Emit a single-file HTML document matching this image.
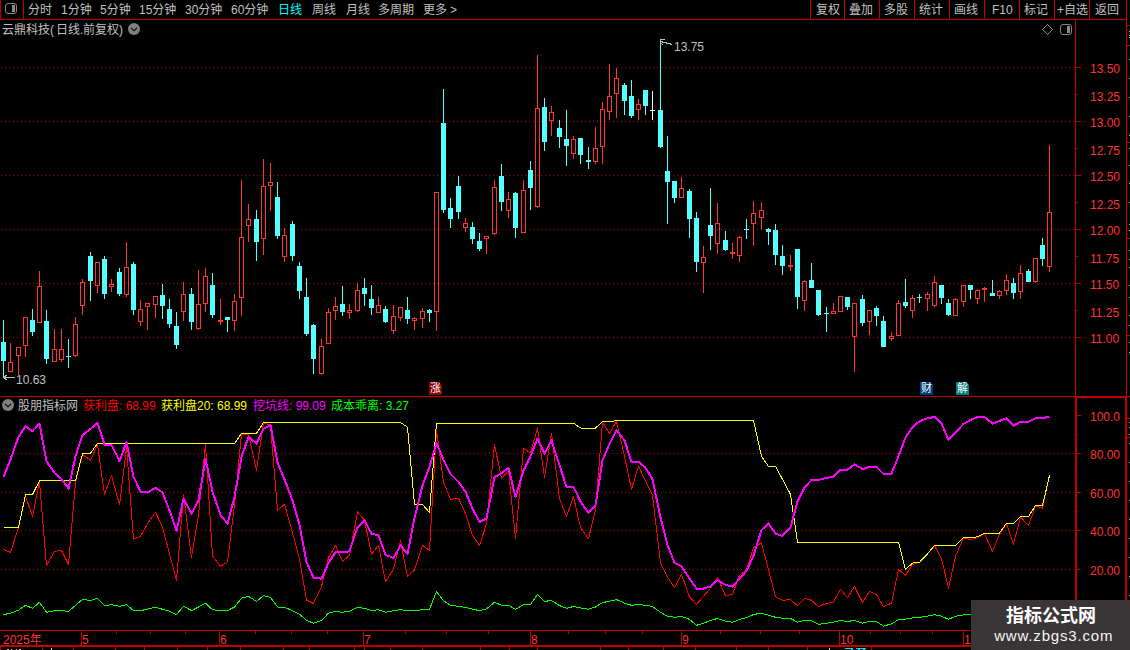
<!DOCTYPE html><html lang="zh"><head><meta charset="utf-8"><title>云鼎科技 日线</title><style>
html,body{margin:0;padding:0;background:#000}
body{width:1130px;height:650px;overflow:hidden;position:relative;font-family:"Liberation Sans","Noto Sans CJK SC",sans-serif;font-size:12px;line-height:12px}
#chart,.ic{position:absolute;left:0;top:0}
.t{position:absolute;white-space:nowrap;height:12px}
i{position:absolute;left:0;top:0;font-style:normal;color:inherit;font-family:"Liberation Sans","Noto Sans CJK SC",sans-serif;font-size:12px;line-height:12px;overflow:visible;white-space:nowrap;width:100%;height:100%}
.mk{position:absolute;width:13px;height:13px;box-sizing:border-box;padding:1px 0 0 1px;clip-path:polygon(0 0,10px 0,13px 3px,13px 13px,0 13px)}
.mk i{font-size:11px;left:1px;top:0;color:#fff}
#wm{position:absolute;left:971px;top:600px;width:159px;height:50px;background:#3a3536}
.wm1{position:absolute;left:35px;top:4.6px;width:90px;height:24px}
.wm1 i{font-size:18px;line-height:22px;font-weight:bold;color:#fff}
.wm2{position:absolute;left:23.2px;top:27.4px;font-size:15px;letter-spacing:0.83px;line-height:18px;color:#f4f4f4;white-space:nowrap}
</style></head><body><svg id="chart" width="1130" height="650" viewBox="0 0 1130 650" shape-rendering="crispEdges"><path d="M1 67.5H1075M1 121.5H1075M1 175.5H1075M1 229.5H1075M1 283.5H1075M1 337.5H1075M1 453.5H1075M1 492.5H1075M1 530.5H1075M1 569.5H1075" stroke="#c00000" stroke-width="1" stroke-dasharray="1 3" fill="none"/><path d="M0 19h1127v1h-1127zM0 0h1v20h-1zM23 0h1v20h-1zM810 0h1v20h-1zM844 0h1v20h-1zM879 0h1v20h-1zM914 0h1v20h-1zM949 0h1v20h-1zM984 0h1v20h-1zM1019 0h1v20h-1zM1054 0h1v20h-1zM1089 0h1v20h-1zM1126 0h1v397h-1zM1075 20h1v377h-1zM0 396h1130v1h-1130zM1075 396h52v2h-52zM1075 396h2v254h-2zM1125 396h2v254h-2zM0 630h1075v1h-1075zM0 645h1075v1h-1075zM0 646h1075v1h-1075zM81 630h1v16h-1zM219 630h1v16h-1zM363 630h1v16h-1zM530 630h1v16h-1zM681 630h1v16h-1zM839 630h1v16h-1zM963 630h1v16h-1zM116 630h1v4h-1zM150 630h1v4h-1zM185 630h1v4h-1zM255 630h1v4h-1zM291 630h1v4h-1zM327 630h1v4h-1zM405 630h1v4h-1zM446 630h1v4h-1zM488 630h1v4h-1zM568 630h1v4h-1zM605 630h1v4h-1zM642 630h1v4h-1zM720 630h1v4h-1zM760 630h1v4h-1zM799 630h1v4h-1zM870 630h1v4h-1zM900 630h1v4h-1zM932 630h1v4h-1zM0 646h1v4h-1zM42 646h1v4h-1zM73 646h1v4h-1zM115 646h1v4h-1zM144 646h1v4h-1zM177 646h1v4h-1zM207 646h1v4h-1zM240 646h1v4h-1zM283 646h1v4h-1zM309 646h1v4h-1zM354 646h1v4h-1zM364 646h1v4h-1zM390 646h1v4h-1zM422 646h1v4h-1zM480 646h1v4h-1zM509 646h1v4h-1zM537 646h1v4h-1zM600 646h1v4h-1zM628 646h1v4h-1zM663 646h1v4h-1zM695 646h1v4h-1zM736 646h1v4h-1zM768 646h1v4h-1zM807 646h1v4h-1zM871 646h1v4h-1zM1076 67h5v1h-5zM1076 94h2v1h-2zM1076 121h5v1h-5zM1076 148h2v1h-2zM1076 175h5v1h-5zM1076 202h2v1h-2zM1076 229h5v1h-5zM1076 256h2v1h-2zM1076 283h5v1h-5zM1076 310h2v1h-2zM1076 337h5v1h-5zM1077 415h4v1h-4zM1077 434h1v1h-1zM1077 453h4v1h-4zM1077 473h1v1h-1zM1077 492h4v1h-4zM1077 511h1v1h-1zM1077 530h4v1h-4zM1077 550h1v1h-1zM1077 569h4v1h-4zM1127 25h3v1h-3zM1127 45h3v1h-3zM1127 142h3v1h-3zM1127 238h3v1h-3zM1127 335h3v1h-3zM1127 418h3v1h-3zM1127 437h3v1h-3z" fill="#c00000"/><path d="M1129 31h1v1h-1zM1129 35h1v1h-1zM1129 37h1v1h-1zM1129 59h1v1h-1zM1129 78h1v1h-1zM1129 97h1v1h-1zM1129 116h1v1h-1zM1129 135h1v1h-1zM1129 148h1v1h-1zM1129 165h1v1h-1zM1129 183h1v1h-1zM1129 202h1v1h-1zM1129 224h1v1h-1zM1129 230h1v1h-1zM1129 250h1v1h-1zM1129 259h1v1h-1zM1129 267h1v1h-1zM1129 285h1v1h-1zM1129 297h1v1h-1zM1129 315h1v1h-1zM1129 325h1v1h-1zM1129 342h1v1h-1zM1129 352h1v1h-1zM1129 422h1v1h-1zM1129 427h1v1h-1zM1129 434h1v1h-1zM1129 443h1v1h-1zM1129 462h1v1h-1zM1129 481h1v1h-1zM1129 500h1v1h-1zM1129 519h1v1h-1zM1129 538h1v1h-1zM1129 557h1v1h-1zM1129 576h1v1h-1zM1129 595h1v1h-1z" fill="#c0c0c0"/><path d="M10 343h1v19h-1zM8 362h5v10h-5zM9 363h3v8h-3zM18 356h1v19h-1zM16 347h5v9h-5zM17 348h3v7h-3zM25 346h1v11h-1zM23 317h5v29h-5zM24 318h3v27h-3zM39 271h1v15h-1zM37 286h5v37h-5zM38 287h3v35h-3zM54 329h1v20h-1zM52 349h5v13h-5zM53 350h3v11h-3zM61 329h1v20h-1zM61 360h1v2h-1zM59 349h5v11h-5zM60 350h3v9h-3zM75 317h1v7h-1zM75 356h1v1h-1zM73 324h5v32h-5zM74 325h3v30h-3zM82 279h1v3h-1zM82 306h1v9h-1zM80 282h5v24h-5zM81 283h3v22h-3zM97 286h1v7h-1zM95 262h5v24h-5zM96 263h3v22h-3zM111 279h1v5h-1zM111 287h1v5h-1zM109 284h5v3h-5zM110 285h3v1h-3zM126 242h1v25h-1zM126 295h1v2h-1zM124 267h5v28h-5zM125 268h3v26h-3zM140 300h1v9h-1zM140 322h1v4h-1zM138 309h5v13h-5zM139 310h3v11h-3zM147 307h1v23h-1zM145 303h5v4h-5zM146 304h3v2h-3zM155 305h1v13h-1zM153 296h5v9h-5zM154 297h3v7h-3zM183 282h1v12h-1zM183 312h1v9h-1zM181 294h5v18h-5zM182 295h3v16h-3zM198 270h1v34h-1zM198 329h1v1h-1zM196 304h5v25h-5zM197 305h3v23h-3zM205 268h1v8h-1zM205 304h1v8h-1zM203 276h5v28h-5zM204 277h3v26h-3zM220 299h1v21h-1zM220 322h1v3h-1zM218 320h5v2h-5zM234 294h1v7h-1zM234 321h1v10h-1zM232 301h5v20h-5zM233 302h3v18h-3zM241 180h1v57h-1zM241 298h1v18h-1zM239 237h5v61h-5zM240 238h3v59h-3zM248 204h1v15h-1zM248 226h1v16h-1zM246 219h5v7h-5zM247 220h3v5h-3zM263 159h1v27h-1zM263 239h1v16h-1zM261 186h5v53h-5zM262 187h3v51h-3zM270 163h1v19h-1zM270 186h1v25h-1zM268 182h5v4h-5zM269 183h3v2h-3zM284 228h1v7h-1zM284 257h1v5h-1zM282 235h5v22h-5zM283 236h3v20h-3zM321 339h1v7h-1zM321 374h1v1h-1zM319 346h5v28h-5zM320 347h3v26h-3zM328 308h1v4h-1zM326 312h5v32h-5zM327 313h3v30h-3zM335 297h1v9h-1zM335 311h1v9h-1zM333 306h5v5h-5zM334 307h3v3h-3zM349 304h1v6h-1zM349 313h1v6h-1zM347 310h5v3h-5zM348 311h3v1h-3zM357 283h1v7h-1zM357 311h1v1h-1zM355 290h5v21h-5zM356 291h3v19h-3zM378 297h1v8h-1zM376 305h5v8h-5zM377 306h3v6h-3zM393 305h1v11h-1zM393 331h1v3h-1zM391 316h5v15h-5zM392 317h3v13h-3zM400 318h1v3h-1zM398 307h5v11h-5zM399 308h3v9h-3zM414 317h1v1h-1zM414 321h1v9h-1zM412 318h5v3h-5zM413 319h3v1h-3zM422 308h1v3h-1zM422 319h1v9h-1zM420 311h5v8h-5zM421 312h3v6h-3zM436 312h1v19h-1zM434 192h5v120h-5zM435 193h3v118h-3zM465 218h1v5h-1zM465 228h1v4h-1zM463 223h5v5h-5zM464 224h3v3h-3zM486 239h1v15h-1zM484 236h5v3h-5zM485 237h3v1h-3zM494 180h1v7h-1zM494 234h1v1h-1zM492 187h5v47h-5zM493 188h3v45h-3zM508 192h1v7h-1zM508 211h1v7h-1zM506 199h5v12h-5zM507 200h3v10h-3zM523 180h1v10h-1zM521 190h5v43h-5zM522 191h3v41h-3zM537 55h1v53h-1zM537 207h1v1h-1zM535 108h5v99h-5zM536 109h3v97h-3zM551 106h1v6h-1zM551 121h1v15h-1zM549 112h5v9h-5zM550 113h3v7h-3zM573 136h1v3h-1zM573 154h1v5h-1zM571 139h5v15h-5zM572 140h3v13h-3zM595 127h1v21h-1zM595 162h1v2h-1zM593 148h5v14h-5zM594 149h3v12h-3zM602 102h1v7h-1zM602 147h1v17h-1zM600 109h5v38h-5zM601 110h3v36h-3zM609 64h1v32h-1zM609 112h1v8h-1zM607 96h5v16h-5zM608 97h3v14h-3zM616 68h1v10h-1zM616 94h1v24h-1zM614 78h5v16h-5zM615 79h3v14h-3zM638 99h1v5h-1zM638 110h1v10h-1zM636 104h5v6h-5zM637 105h3v4h-3zM681 177h1v11h-1zM679 188h5v10h-5zM680 189h3v8h-3zM703 246h1v11h-1zM703 263h1v30h-1zM701 257h5v6h-5zM702 258h3v4h-3zM717 203h1v20h-1zM717 244h1v10h-1zM715 223h5v21h-5zM716 224h3v19h-3zM732 243h1v9h-1zM732 254h1v5h-1zM730 252h5v2h-5zM739 236h1v1h-1zM739 256h1v6h-1zM737 237h5v19h-5zM738 238h3v17h-3zM753 201h1v12h-1zM753 224h1v22h-1zM751 213h5v11h-5zM752 214h3v9h-3zM761 202h1v8h-1zM761 218h1v12h-1zM759 210h5v8h-5zM760 211h3v6h-3zM790 255h1v10h-1zM790 267h1v4h-1zM788 265h5v2h-5zM804 280h1v1h-1zM804 301h1v10h-1zM802 281h5v20h-5zM803 282h3v18h-3zM833 303h1v8h-1zM831 311h5v3h-5zM832 312h3v1h-3zM838 296h5v16h-5zM839 297h3v14h-3zM854 337h1v35h-1zM852 303h5v34h-5zM853 304h3v32h-3zM869 322h1v13h-1zM867 310h5v12h-5zM868 311h3v10h-3zM891 332h1v4h-1zM891 339h1v2h-1zM889 336h5v3h-5zM890 337h3v1h-3zM898 300h1v3h-1zM896 303h5v33h-5zM897 304h3v31h-3zM912 295h1v3h-1zM912 311h1v7h-1zM910 298h5v13h-5zM911 299h3v11h-3zM927 292h1v2h-1zM927 299h1v12h-1zM925 294h5v5h-5zM926 295h3v3h-3zM934 276h1v6h-1zM934 306h1v1h-1zM932 282h5v24h-5zM933 283h3v22h-3zM955 298h1v1h-1zM953 299h5v17h-5zM954 300h3v15h-3zM963 302h1v5h-1zM961 285h5v17h-5zM962 286h3v15h-3zM977 289h1v1h-1zM977 299h1v5h-1zM975 290h5v9h-5zM976 291h3v7h-3zM984 287h1v1h-1zM984 290h1v12h-1zM982 288h5v2h-5zM999 290h1v1h-1zM999 296h1v3h-1zM997 291h5v5h-5zM998 292h3v3h-3zM1006 274h1v6h-1zM1006 291h1v4h-1zM1004 280h5v11h-5zM1005 281h3v9h-3zM1020 265h1v8h-1zM1020 292h1v7h-1zM1018 273h5v19h-5zM1019 274h3v17h-3zM1035 282h1v1h-1zM1033 258h5v24h-5zM1034 259h3v22h-3zM1049 145h1v67h-1zM1049 267h1v5h-1zM1047 212h5v55h-5zM1048 213h3v53h-3z" fill="#ff3232" fill-rule="evenodd"/><path d="M3 320h1v57h-1zM1 342h5v19h-5zM32 309h1v27h-1zM30 320h5v12h-5zM46 310h1v54h-1zM44 321h5v38h-5zM68 339h1v29h-1zM66 356h5v1h-5zM90 252h1v49h-1zM88 256h5v25h-5zM104 256h1v43h-1zM102 259h5v35h-5zM119 268h1v28h-1zM117 272h5v22h-5zM133 262h1v53h-1zM131 264h5v46h-5zM162 284h1v35h-1zM160 295h5v11h-5zM169 299h1v29h-1zM167 309h5v15h-5zM176 312h1v37h-1zM174 326h5v19h-5zM191 288h1v42h-1zM189 294h5v28h-5zM212 273h1v45h-1zM210 285h5v30h-5zM227 317h1v15h-1zM225 317h5v3h-5zM256 210h1v51h-1zM254 219h5v23h-5zM277 182h1v57h-1zM275 197h5v39h-5zM292 221h1v40h-1zM290 224h5v32h-5zM299 262h1v37h-1zM297 266h5v25h-5zM306 278h1v58h-1zM304 297h5v37h-5zM313 324h1v50h-1zM311 325h5v34h-5zM342 286h1v30h-1zM340 304h5v8h-5zM364 278h1v28h-1zM362 288h5v6h-5zM371 285h1v30h-1zM369 299h5v9h-5zM385 306h1v17h-1zM383 309h5v13h-5zM407 297h1v27h-1zM405 310h5v9h-5zM429 309h1v13h-1zM427 310h5v3h-5zM443 89h1v124h-1zM441 123h5v87h-5zM450 198h1v30h-1zM448 208h5v11h-5zM458 176h1v43h-1zM456 186h5v26h-5zM472 222h1v22h-1zM470 227h5v12h-5zM479 233h1v18h-1zM477 241h5v8h-5zM501 164h1v47h-1zM499 176h5v26h-5zM515 192h1v46h-1zM513 193h5v35h-5zM530 161h1v49h-1zM528 170h5v18h-5zM544 98h1v53h-1zM542 107h5v35h-5zM559 120h1v28h-1zM557 128h5v9h-5zM566 110h1v56h-1zM564 139h5v7h-5zM580 138h1v26h-1zM578 138h5v17h-5zM588 147h1v22h-1zM586 160h5v2h-5zM624 83h1v32h-1zM622 85h5v16h-5zM631 80h1v38h-1zM629 96h5v20h-5zM645 90h1v25h-1zM643 90h5v16h-5zM660 39h1v109h-1zM658 110h5v37h-5zM667 136h1v88h-1zM665 171h5v11h-5zM674 181h1v22h-1zM672 181h5v17h-5zM689 189h1v49h-1zM687 191h5v28h-5zM696 212h1v60h-1zM694 218h5v44h-5zM710 188h1v62h-1zM708 225h5v11h-5zM725 231h1v20h-1zM723 240h5v10h-5zM746 219h1v20h-1zM744 229h5v1h-5zM768 228h1v17h-1zM766 229h5v3h-5zM775 224h1v41h-1zM773 230h5v25h-5zM782 245h1v30h-1zM780 256h5v10h-5zM797 249h1v60h-1zM795 249h5v48h-5zM811 263h1v25h-1zM809 280h5v8h-5zM818 290h1v26h-1zM816 290h5v25h-5zM826 307h1v25h-1zM824 313h5v1h-5zM847 297h1v13h-1zM845 297h5v10h-5zM862 295h1v31h-1zM860 299h5v24h-5zM876 306h1v20h-1zM874 308h5v8h-5zM883 316h1v31h-1zM881 321h5v26h-5zM905 279h1v29h-1zM903 302h5v4h-5zM919 294h1v9h-1zM917 297h5v1h-5zM941 285h1v19h-1zM939 285h5v13h-5zM948 299h1v17h-1zM946 303h5v12h-5zM970 285h1v14h-1zM968 285h5v5h-5zM992 280h1v16h-1zM990 293h5v3h-5zM1013 278h1v21h-1zM1011 283h5v10h-5zM1028 269h1v13h-1zM1026 271h5v11h-5zM1042 238h1v28h-1zM1040 245h5v14h-5z" fill="#54ffff"/><path d="M652 91h1v29h-1zM650 110h5v1h-5z" fill="#ffffff"/><polyline points="3.5,549.2 10.5,552.5 18.5,527.4 25.5,496.2 32.5,516.6 39.5,481.5 46.5,565.4 54.5,551.3 61.5,550.4 68.5,564.6 75.5,482.0 82.5,454.6 90.5,460.2 97.5,444.8 104.5,494.4 111.5,475.3 119.5,505.0 126.5,447.5 133.5,539.2 140.5,536.2 147.5,523.8 155.5,512.1 162.5,527.4 169.5,553.9 176.5,580.5 183.5,494.4 191.5,557.5 198.5,515.0 205.5,444.3 212.5,555.7 220.5,566.3 227.5,561.9 234.5,505.0 241.5,434.2 248.5,434.2 256.5,470.5 263.5,422.7 270.5,425.4 277.5,510.3 284.5,504.1 292.5,532.7 299.5,559.2 306.5,600.0 313.5,603.5 321.5,586.7 328.5,557.5 335.5,545.4 342.5,561.4 349.5,555.4 357.5,512.0 364.5,520.3 371.5,554.3 378.5,545.4 385.5,581.7 393.5,569.0 400.5,540.7 407.5,576.6 414.5,569.9 422.5,545.4 429.5,550.4 436.5,429.8 443.5,482.3 450.5,499.3 458.5,498.3 465.5,513.5 472.5,535.4 479.5,545.4 486.5,523.8 494.5,444.3 501.5,478.5 508.5,470.5 515.5,538.5 523.5,448.4 530.5,452.8 537.5,428.0 544.5,477.6 551.5,433.3 559.5,498.8 566.5,516.5 573.5,497.0 580.5,527.4 588.5,538.9 595.5,509.7 602.5,422.2 609.5,433.3 616.5,421.3 624.5,456.3 631.5,489.6 638.5,466.1 645.5,481.1 652.5,495.3 660.5,562.8 667.5,577.0 674.5,587.6 681.5,574.6 689.5,596.8 696.5,604.4 703.5,596.4 710.5,588.5 717.5,577.8 725.5,595.5 732.5,594.6 739.5,575.2 746.5,569.9 753.5,547.7 761.5,542.8 768.5,570.0 775.5,596.8 782.5,600.3 790.5,599.6 797.5,605.6 804.5,598.2 811.5,600.3 818.5,606.5 826.5,603.5 833.5,602.1 840.5,589.3 847.5,597.7 854.5,586.3 862.5,602.6 869.5,591.1 876.5,594.6 883.5,606.7 891.5,603.1 898.5,569.5 905.5,575.2 912.5,564.6 919.5,562.3 927.5,553.9 934.5,545.6 941.5,558.7 948.5,588.2 955.5,556.5 963.5,537.8 970.5,539.6 977.5,537.8 984.5,533.7 992.5,551.6 999.5,534.2 1006.5,524.0 1013.5,544.3 1020.5,517.1 1028.5,525.4 1035.5,505.9 1042.5,508.2 1049.5,475.4" fill="none" stroke="#ff0000" stroke-width="1" stroke-linejoin="round"/><polyline points="3.5,527.4 10.5,527.4 18.5,527.4 25.5,494.9 32.5,494.4 39.5,480.8 46.5,480.8 54.5,480.8 61.5,480.8 68.5,480.8 75.5,480.8 82.5,453.7 90.5,453.1 97.5,443.6 104.5,443.6 111.5,443.6 119.5,443.6 126.5,443.6 133.5,443.6 140.5,443.6 147.5,443.6 155.5,443.6 162.5,443.6 169.5,443.6 176.5,443.6 183.5,443.6 191.5,443.6 198.5,443.6 205.5,443.6 212.5,443.6 220.5,443.6 227.5,443.6 234.5,443.6 241.5,433.3 248.5,433.3 256.5,433.3 263.5,422.6 270.5,422.6 277.5,422.6 284.5,422.6 292.5,422.6 299.5,422.6 306.5,422.6 313.5,422.6 321.5,422.6 328.5,422.6 335.5,422.6 342.5,422.6 349.5,422.6 357.5,422.6 364.5,422.6 371.5,422.6 378.5,422.6 385.5,422.6 393.5,422.6 400.5,422.6 407.5,427.1 414.5,504.1 422.5,504.5 429.5,512.4 436.5,423.2 443.5,423.2 450.5,423.2 458.5,423.2 465.5,423.2 472.5,423.2 479.5,423.2 486.5,423.2 494.5,423.2 501.5,423.2 508.5,423.2 515.5,423.2 523.5,423.2 530.5,423.2 537.5,423.2 544.5,423.2 551.5,423.2 559.5,423.2 566.5,423.2 573.5,423.2 580.5,428.0 588.5,428.0 595.5,428.0 602.5,421.8 609.5,421.8 616.5,420.6 624.5,420.6 631.5,420.6 638.5,420.6 645.5,420.6 652.5,420.6 660.5,420.6 667.5,420.6 674.5,420.6 681.5,420.6 689.5,420.6 696.5,420.6 703.5,420.6 710.5,420.6 717.5,420.6 725.5,420.6 732.5,420.6 739.5,420.6 746.5,420.6 753.5,420.6 761.5,456.3 768.5,466.4 775.5,466.4 782.5,479.3 790.5,494.4 797.5,542.4 804.5,542.4 811.5,542.4 818.5,542.4 826.5,542.4 833.5,542.4 840.5,542.4 847.5,542.4 854.5,542.4 862.5,542.4 869.5,542.4 876.5,542.4 883.5,542.4 891.5,542.4 898.5,542.4 905.5,569.5 912.5,563.1 919.5,562.3 927.5,553.9 934.5,545.5 941.5,545.5 948.5,545.5 955.5,545.5 963.5,537.4 970.5,537.4 977.5,536.9 984.5,533.0 992.5,533.0 999.5,533.0 1006.5,523.3 1013.5,523.3 1020.5,516.5 1028.5,516.5 1035.5,505.6 1042.5,505.6 1049.5,475.4" fill="none" stroke="#ffff00" stroke-width="1" stroke-linejoin="round"/><polyline points="3.5,477.2 10.5,459.5 18.5,436.9 25.5,426.2 32.5,431.2 39.5,423.6 46.5,461.3 54.5,473.0 61.5,479.0 68.5,488.5 75.5,456.3 82.5,435.1 90.5,428.9 97.5,422.7 104.5,444.8 111.5,444.8 119.5,461.3 126.5,442.2 133.5,476.7 140.5,491.7 147.5,492.6 155.5,487.8 162.5,492.6 169.5,510.3 176.5,530.9 183.5,498.8 191.5,513.5 198.5,500.6 205.5,459.0 212.5,491.7 220.5,515.0 227.5,523.5 234.5,497.0 241.5,457.2 248.5,436.9 256.5,443.6 263.5,428.9 270.5,425.0 277.5,462.5 284.5,479.3 292.5,500.6 299.5,525.0 306.5,561.9 313.5,577.8 321.5,578.7 328.5,562.8 335.5,552.2 342.5,552.2 349.5,551.3 357.5,527.4 364.5,520.3 371.5,533.6 378.5,535.4 385.5,554.8 393.5,558.0 400.5,545.4 407.5,553.9 414.5,518.0 422.5,485.5 429.5,467.0 436.5,443.0 443.5,459.9 450.5,474.0 458.5,482.0 465.5,491.7 472.5,508.5 479.5,522.0 486.5,518.4 494.5,477.2 501.5,473.1 508.5,467.8 515.5,497.0 523.5,470.5 530.5,456.3 537.5,438.6 544.5,453.7 551.5,440.4 559.5,465.2 566.5,486.8 573.5,486.8 580.5,501.5 588.5,513.0 595.5,505.4 602.5,460.2 609.5,443.9 616.5,430.1 624.5,440.4 631.5,462.0 638.5,461.6 645.5,467.8 652.5,479.3 660.5,517.5 667.5,545.1 674.5,562.8 681.5,566.3 689.5,578.7 696.5,588.5 703.5,588.5 710.5,586.7 717.5,580.0 725.5,584.9 732.5,586.7 739.5,578.7 746.5,570.8 753.5,555.7 761.5,530.0 768.5,523.5 775.5,533.6 782.5,535.9 790.5,527.4 797.5,501.5 804.5,487.3 811.5,479.9 818.5,479.9 826.5,477.9 833.5,476.7 840.5,469.6 847.5,469.6 854.5,464.3 862.5,469.1 869.5,466.9 876.5,466.9 883.5,474.0 891.5,473.7 898.5,456.3 905.5,437.7 912.5,427.1 919.5,421.3 927.5,418.3 934.5,416.9 941.5,423.6 948.5,439.9 955.5,432.4 963.5,423.9 970.5,420.0 977.5,417.0 984.5,417.0 992.5,423.6 999.5,420.9 1006.5,418.3 1013.5,425.7 1020.5,421.8 1028.5,421.8 1035.5,418.3 1042.5,417.9 1049.5,417.0" fill="none" stroke="#ff00ff" stroke-width="2" stroke-linejoin="round"/><polyline points="3.5,614.6 10.5,613.2 18.5,610.2 25.5,605.3 32.5,608.3 39.5,602.3 46.5,612.3 54.5,610.6 61.5,610.6 68.5,611.5 75.5,605.3 82.5,599.4 90.5,600.5 97.5,598.2 104.5,605.6 111.5,604.6 119.5,606.3 126.5,604.6 133.5,610.6 140.5,610.6 147.5,609.2 155.5,607.2 162.5,609.3 169.5,611.1 176.5,614.6 183.5,606.3 191.5,610.6 198.5,607.0 205.5,603.1 212.5,609.7 220.5,610.6 227.5,610.6 234.5,607.0 241.5,598.2 248.5,596.4 256.5,601.4 263.5,595.5 270.5,597.3 277.5,607.0 284.5,607.4 292.5,610.6 299.5,614.1 306.5,620.3 313.5,623.3 321.5,620.3 328.5,613.2 335.5,611.5 342.5,612.3 349.5,611.1 357.5,607.4 364.5,608.3 371.5,610.6 378.5,609.7 385.5,612.3 393.5,610.6 400.5,609.7 407.5,610.6 414.5,610.6 422.5,609.7 429.5,609.3 436.5,591.5 443.5,600.8 450.5,605.3 458.5,606.3 465.5,607.4 472.5,609.2 479.5,610.6 486.5,608.8 494.5,602.3 501.5,605.3 508.5,605.3 515.5,609.3 523.5,604.7 530.5,604.4 537.5,594.6 544.5,601.4 551.5,600.5 559.5,605.6 566.5,608.3 573.5,606.5 580.5,607.9 588.5,609.3 595.5,607.0 602.5,602.6 609.5,601.2 616.5,599.6 624.5,603.1 631.5,605.3 638.5,604.4 645.5,605.3 652.5,606.5 660.5,612.3 667.5,616.2 674.5,617.3 681.5,616.4 689.5,619.4 696.5,625.3 703.5,623.3 710.5,620.3 717.5,618.5 725.5,621.2 732.5,622.3 739.5,619.4 746.5,617.7 753.5,614.5 761.5,613.2 768.5,615.2 775.5,617.3 782.5,618.2 790.5,618.5 797.5,622.1 804.5,620.5 811.5,620.7 818.5,624.4 826.5,623.3 833.5,622.1 840.5,620.5 847.5,621.4 854.5,620.5 862.5,623.1 869.5,621.5 876.5,621.5 883.5,626.2 891.5,623.8 898.5,619.8 905.5,619.1 912.5,618.0 919.5,617.3 927.5,616.2 934.5,614.6 941.5,616.2 948.5,619.4 955.5,616.2 963.5,615.0 970.5,614.5 977.5,614.0 984.5,613.5 992.5,613.0 999.5,613.0 1006.5,612.5 1013.5,612.5 1020.5,612.0 1028.5,612.0 1035.5,611.5 1042.5,611.0 1049.5,610.0" fill="none" stroke="#00ff00" stroke-width="1" stroke-linejoin="round"/><path d="M660.5 41.5L672.5 44.5M660.5 42.5V39.5H664.5M661.5 43.5L663.5 45.5" stroke="#c0c0c0" fill="none"/><path d="M3.5 377.5H15M3.5 377.5L7.5 374.5M3.5 377.5L7.5 380.5" stroke="#c0c0c0" fill="none"/><path d="M845 648h8v2h-2v-1h-6zM856 648h10v1h-10zM858 649h2v1h-2zM863 649h2v1h-2z" fill="#00e0e0"/><path d="M829 648h1v2h-1zM7 649h2v1h-2zM11 649h1v1h-1zM16 649h1v1h-1zM19 649h2v1h-2zM51 648h1v2h-1z" fill="#d0d0d0"/></svg><svg class="ic" style="left:0;top:0" width="1130" height="650" viewBox="0 0 1130 650">
<rect x="5.5" y="3.5" width="11" height="10" rx="2.5" fill="none" stroke="#848484"/><rect x="12" y="5" width="3" height="7" fill="#8a8a8a"/>
<rect x="1060.5" y="24.5" width="11" height="10" rx="2.5" fill="none" stroke="#848484"/><rect x="1067" y="26" width="3" height="7" fill="#8a8a8a"/>
<path d="M1047 24h1v1h-1zM1046 25h1v1h-1zM1048 25h1v1h-1zM1045 26h1v1h-1zM1049 26h1v1h-1zM1044 27h1v1h-1zM1050 27h1v1h-1zM1043 28h1v1h-1zM1051 28h1v1h-1zM1042 29h1v1h-1zM1052 29h1v1h-1zM1043 30h1v1h-1zM1051 30h1v1h-1zM1044 31h1v1h-1zM1050 31h1v1h-1zM1045 32h1v1h-1zM1049 32h1v1h-1zM1046 33h1v1h-1zM1048 33h1v1h-1zM1047 34h1v1h-1z" fill="#8c8c8c" shape-rendering="crispEdges"/>
<circle cx="134" cy="29" r="6" fill="#808080"/><path d="M131 27.8L134 30.8L137 27.8" fill="none" stroke="#000" stroke-width="1.1"/>
<circle cx="8" cy="405" r="6" fill="#808080"/><path d="M5 403.8L8 406.8L11 403.8" fill="none" stroke="#000" stroke-width="1.1"/>
</svg><div class="mk" style="left:429px;top:382px;background:#8b0000"><i>涨</i></div><div class="mk" style="left:920px;top:382px;background:#003f7f"><i>财</i></div><div class="mk" style="left:956px;top:382px;background:#008080"><i>解</i></div><div class="t " style="left:28px;top:4px;width:24px;color:#c0c0c0;"><i>分时</i></div><div class="t " style="left:61px;top:4px;width:31px;color:#c0c0c0;"><i>1分钟</i></div><div class="t " style="left:100px;top:4px;width:31px;color:#c0c0c0;"><i>5分钟</i></div><div class="t " style="left:139px;top:4px;width:38px;color:#c0c0c0;"><i>15分钟</i></div><div class="t " style="left:185px;top:4px;width:38px;color:#c0c0c0;"><i>30分钟</i></div><div class="t " style="left:231px;top:4px;width:38px;color:#c0c0c0;"><i>60分钟</i></div><div class="t " style="left:278px;top:4px;width:24px;color:#00ffff;"><i>日线</i></div><div class="t " style="left:312px;top:4px;width:24px;color:#c0c0c0;"><i>周线</i></div><div class="t " style="left:346px;top:4px;width:24px;color:#c0c0c0;"><i>月线</i></div><div class="t " style="left:378px;top:4px;width:36px;color:#c0c0c0;"><i>多周期</i></div><div class="t " style="left:423px;top:4px;width:24px;color:#c0c0c0;"><i>更多</i></div><div class="t " style="left:450px;top:4px;width:7px;color:#c0c0c0;"><i>&gt;</i></div><div class="t " style="left:816px;top:4px;width:24px;color:#c0c0c0;"><i>复权</i></div><div class="t " style="left:849px;top:4px;width:24px;color:#c0c0c0;"><i>叠加</i></div><div class="t " style="left:884px;top:4px;width:24px;color:#c0c0c0;"><i>多股</i></div><div class="t " style="left:919px;top:4px;width:24px;color:#c0c0c0;"><i>统计</i></div><div class="t " style="left:954px;top:4px;width:24px;color:#c0c0c0;"><i>画线</i></div><div class="t " style="left:992px;top:4px;width:21px;color:#c0c0c0;"><i>F10</i></div><div class="t " style="left:1024px;top:4px;width:24px;color:#c0c0c0;"><i>标记</i></div><div class="t " style="left:1057px;top:4px;width:31px;color:#c0c0c0;"><i>+自选</i></div><div class="t " style="left:1095px;top:4px;width:24px;color:#c0c0c0;"><i>返回</i></div><div class="t " style="left:2px;top:24px;width:48px;color:#c0c0c0;"><i>云鼎科技</i></div><div class="t " style="left:50px;top:24px;width:6px;color:#c0c0c0;"><i>(</i></div><div class="t " style="left:56px;top:24px;width:24px;color:#c0c0c0;"><i>日线</i></div><div class="t " style="left:80px;top:24px;width:3px;color:#c0c0c0;"><i>.</i></div><div class="t " style="left:83px;top:24px;width:36px;color:#c0c0c0;"><i>前复权</i></div><div class="t " style="left:119px;top:24px;width:6px;color:#c0c0c0;"><i>)</i></div><div class="t " style="left:18px;top:400px;width:60px;color:#c0c0c0;"><i>股朋指标网</i></div><div class="t " style="left:83px;top:400px;width:73px;color:#ff0000;"><i>获利盘: 68.99</i></div><div class="t " style="left:161px;top:400px;width:87px;color:#ffff00;"><i>获利盘20: 68.99</i></div><div class="t " style="left:253px;top:400px;width:73px;color:#ff00ff;"><i>挖坑线: 99.09</i></div><div class="t " style="left:331px;top:400px;width:78px;color:#00ff00;"><i>成本乖离: 3.27</i></div><div class="t " style="left:3px;top:634px;width:40px;color:#ff3232;"><i>2025年</i></div><div class="t " style="left:82px;top:634px;width:7px;color:#ff3232;"><i>5</i></div><div class="t " style="left:220px;top:634px;width:7px;color:#ff3232;"><i>6</i></div><div class="t " style="left:364px;top:634px;width:7px;color:#ff3232;"><i>7</i></div><div class="t " style="left:531px;top:634px;width:7px;color:#ff3232;"><i>8</i></div><div class="t " style="left:682px;top:634px;width:7px;color:#ff3232;"><i>9</i></div><div class="t " style="left:840px;top:634px;width:14px;color:#ff3232;"><i>10</i></div><div class="t " style="left:964px;top:634px;width:14px;color:#ff3232;"><i>11</i></div><div class="t " style="left:1090px;top:63px;width:31px;color:#ff3232;"><i>13.50</i></div><div class="t " style="left:1090px;top:91px;width:31px;color:#ff3232;"><i>13.25</i></div><div class="t " style="left:1090px;top:117px;width:31px;color:#ff3232;"><i>13.00</i></div><div class="t " style="left:1090px;top:145px;width:31px;color:#ff3232;"><i>12.75</i></div><div class="t " style="left:1090px;top:171px;width:31px;color:#ff3232;"><i>12.50</i></div><div class="t " style="left:1090px;top:199px;width:31px;color:#ff3232;"><i>12.25</i></div><div class="t " style="left:1090px;top:225px;width:31px;color:#ff3232;"><i>12.00</i></div><div class="t " style="left:1090px;top:253px;width:31px;color:#ff3232;"><i>11.75</i></div><div class="t " style="left:1090px;top:279px;width:31px;color:#ff3232;"><i>11.50</i></div><div class="t " style="left:1090px;top:307px;width:31px;color:#ff3232;"><i>11.25</i></div><div class="t " style="left:1090px;top:333px;width:31px;color:#ff3232;"><i>11.00</i></div><div class="t " style="left:1090px;top:411px;width:31px;color:#ff3232;"><i>100.0</i></div><div class="t " style="left:1090px;top:449px;width:31px;color:#ff3232;"><i>80.00</i></div><div class="t " style="left:1090px;top:488px;width:31px;color:#ff3232;"><i>60.00</i></div><div class="t " style="left:1090px;top:526px;width:31px;color:#ff3232;"><i>40.00</i></div><div class="t " style="left:1090px;top:565px;width:31px;color:#ff3232;"><i>20.00</i></div><div class="t " style="left:674px;top:41px;width:31px;color:#c0c0c0;"><i>13.75</i></div><div class="t " style="left:16px;top:374px;width:31px;color:#c0c0c0;"><i>10.63</i></div><div id="wm"><div class="wm1"><i>指标公式网</i></div><div class="wm2">www.zbgs3.com</div></div></body></html>
